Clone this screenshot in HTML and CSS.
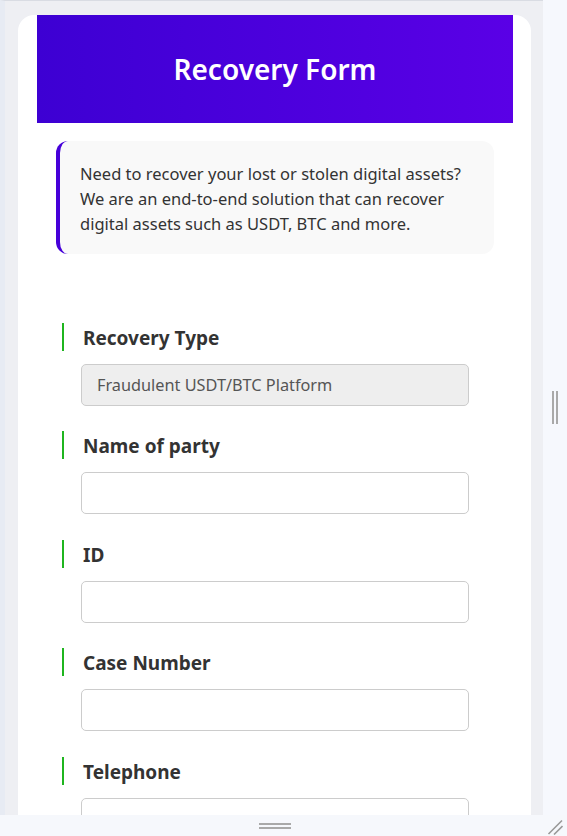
FILE: index.html
```html
<!DOCTYPE html>
<html lang="en">
<head>
<meta charset="utf-8">
<title>Recovery Form</title>
<link rel="stylesheet" href="styles.css">
</head>
<body>
<div class="app">
  <div class="main">
    <div class="preview">
      <div class="card">
        <div class="header"><h1 class="title">Recovery Form</h1></div>
        <div class="intro">Need to recover your lost or stolen digital assets? We are an end-to-end solution that can recover digital assets such as USDT, BTC and more.</div>
        <form class="form">
          <div class="field">
            <label class="label">Recovery Type</label>
            <input class="input input-disabled" type="text" value="Fraudulent USDT/BTC Platform" disabled>
          </div>
          <div class="field">
            <label class="label">Name of party</label>
            <input class="input" type="text">
          </div>
          <div class="field">
            <label class="label">ID</label>
            <input class="input" type="text">
          </div>
          <div class="field">
            <label class="label">Case Number</label>
            <input class="input" type="text">
          </div>
          <div class="field">
            <label class="label">Telephone</label>
            <input class="input" type="text">
          </div>
        </form>
      </div>
    </div>
    <div class="side"><div class="vhandle"></div></div>
  </div>
  <div class="bottom">
    <div class="hhandle"></div>
    <svg class="grip" width="16" height="16" viewBox="0 0 16 16"><path d="M1.5 15 L15 1.5 M7 15.5 L15.5 7" stroke="#9a9a9a" stroke-width="1.6" fill="none"/></svg>
  </div>
</div>
</body>
</html>
```

FILE: styles.css
```css
html, body {
  margin: 0;
  padding: 0;
  height: 836px;
  overflow: hidden;
}
body {
  font-family: "Noto Sans", "Open Sans", sans-serif;
  color: #333;
  background: #f6f8fc;
}
.app {
  display: flex;
  flex-direction: column;
  height: 836px;
}
.main {
  display: flex;
  height: 815px;
  overflow: hidden;
}
.preview {
  width: 543px;
  box-sizing: border-box;
  background: #eeeff3;
  border-top: 1px solid #d9dce3;
  border-left: 5px solid #e7ebf3;
  padding: 14px 0 0 13px;
  overflow: hidden;
}
.card {
  width: 513px;
  box-sizing: border-box;
  background: #fff;
  border-radius: 16px;
  padding: 0 18px 40px 19px;
}
.header {
  height: 108px;
  display: flex;
  align-items: center;
  justify-content: center;
  background: linear-gradient(90deg, #3d00d3, #5a00e6);
}
.title {
  margin: 0;
  color: #fff;
  font-size: 28px;
  font-weight: 600;
  letter-spacing: 0;
}
.intro {
  margin: 18px 19px 0 19px;
  background: #f9f9f9;
  border-left: 4px solid #4600d9;
  border-radius: 12px;
  padding: 20px 18px 18px 20px;
  font-size: 16.5px;
  line-height: 25px;
}
.form {
  display: flex;
  flex-direction: column;
  gap: 25.4px;
  padding: 69px 0 0 25px;
}
.field {
  display: flex;
  flex-direction: column;
  gap: 13px;
}
.label {
  display: block;
  height: 28px;
  line-height: 30px;
  border-left: 2px solid #1fb51f;
  padding-left: 19px;
  font-size: 19px;
  font-weight: 700;
  color: #333;
}
.input {
  margin-left: 19px;
  width: 388px;
  height: 42px;
  box-sizing: border-box;
  border: 1px solid #ccc;
  border-radius: 5px;
  background: #fff;
  padding: 0 15px;
  font-family: inherit;
  font-size: 16.3px;
  color: #555;
}
.input-disabled {
  background: #eee;
  color: #555;
  -webkit-text-fill-color: #555;
  opacity: 1;
}
.side {
  flex: 1;
  background: #f6f8fd;
  display: flex;
  align-items: center;
  justify-content: center;
}
.vhandle {
  width: 2px;
  height: 33px;
  border-left: 2px solid #a9a9a9;
  border-right: 2px solid #a9a9a9;
  box-sizing: content-box;
}
.bottom {
  height: 21px;
  background: #f6f8fc;
  display: flex;
  align-items: center;
}
.hhandle {
  margin-left: 259px;
  width: 32px;
  height: 2px;
  border-top: 2px solid #a9a9a9;
  border-bottom: 2px solid #a9a9a9;
}
.grip {
  margin-left: auto;
  margin-right: 4px;
  margin-top: 2px;
}
```
